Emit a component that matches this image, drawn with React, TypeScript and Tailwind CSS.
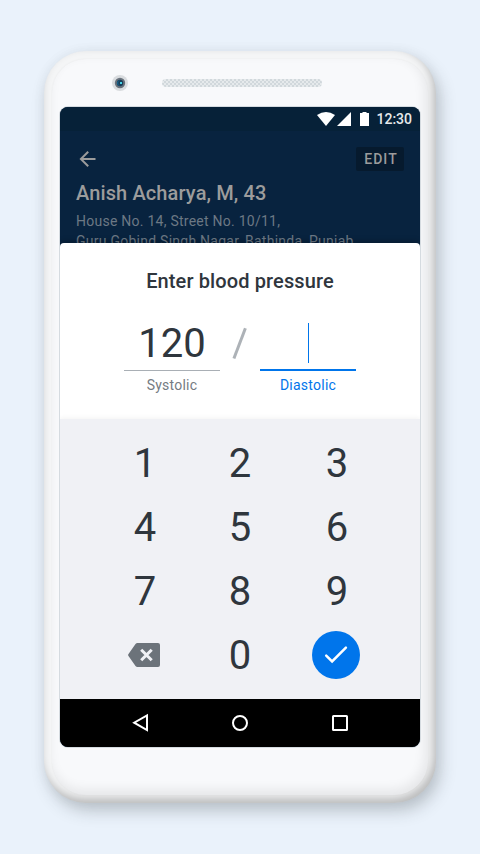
import React from "react";

const digits = ["1", "2", "3", "4", "5", "6", "7", "8", "9"];

function StatusBar() {
  return (
    <div className="flex h-6 shrink-0 items-center justify-end bg-[#062138] pr-2 text-white">
      <svg width="52" height="24" viewBox="0 0 52 24" fill="currentColor">
        <path d="M0 8Q9 2 18 8L9 19Z" />
        <path d="M20 19H34V5Z" />
        <path d="M43 6h2.500V5h4v1H52v13h-9z" />
      </svg>
      <span className="ml-[7px] text-[14px] leading-6 font-medium text-[#e6e9eb]">12:30</span>
    </div>
  );
}

function PatientHeader() {
  return (
    <header className="h-28 shrink-0 overflow-hidden bg-[#08233f] px-4 pt-4 text-[#9c9c9c]">
      <div className="flex h-6 items-center justify-between">
        <svg width="24" height="24" viewBox="0 0 24 24" fill="currentColor">
          <path d="M19.500 11H7.330l5.590-5.590L11.500 4l-8 8 8 8 1.410-1.410L7.330 13H19.500v-2z" />
        </svg>
        <button className="h-6 w-12 rounded-[2px] bg-[#061a2e] pl-[2px] text-[14px] leading-6 font-medium tracking-[1.1px]">EDIT</button>
      </div>
      <h1 className="mt-2 text-[20px] leading-7 font-medium tracking-[0.12px] whitespace-nowrap">Anish Acharya, M, 43</h1>
      <p className="mt-1 text-[14px] leading-5 tracking-[0.25px] whitespace-nowrap text-[#6c7884]">
        House No. 14, Street No. 10/11,
        <br />
        Guru Gobind Singh Nagar, Bathinda, Punjab
      </p>
    </header>
  );
}

function PressureForm() {
  return (
    <section className="h-[176px] shrink-0 bg-white pt-6">
      <h2 className="text-center text-[20px] leading-7 font-medium tracking-[0.12px]">Enter blood pressure</h2>
      <div className="mt-6 flex justify-center">
        <div className="w-24 text-center">
          <div className="h-[52px] border-b border-[#a9afb5] pt-px text-[40px] leading-[48px]">120</div>
          <div className="mt-1 text-[14px] leading-5 tracking-[0.25px] text-[#757b82]">Systolic</div>
        </div>
        <div className="flex w-10 justify-center">
          <svg width="16" height="48" viewBox="0 0 16 48" fill="none">
            <path d="M13.400 9.300L1.900 39.500" stroke="#adb2b7" strokeWidth="3" />
          </svg>
        </div>
        <div className="w-24 text-center">
          <div className="flex h-[52px] justify-center border-b-2 border-[#0075eb] pt-[4px]">
            <span className="h-10 w-px bg-[#0075eb]" />
          </div>
          <div className="mt-1 text-[14px] leading-5 tracking-[0.25px] text-[#0075eb]">Diastolic</div>
        </div>
      </div>
    </section>
  );
}

function Keypad() {
  return (
    <section className="h-[280px] shrink-0 bg-[#f0f1f5] px-12 pt-3 shadow-[0_-1px_5px_rgba(0,0,0,0.05)]">
      <div className="grid grid-cols-[72px_120px_72px] grid-rows-[64px_64px_64px_64px] place-items-center">
        {digits.map((digit, index) => (
          <button key={digit} className={`pt-[2px] text-[40px] leading-[48px] ${index % 3 === 1 ? "" : "pl-[2px]"}`}>{digit}</button>
        ))}
        <button aria-label="Delete">
          <svg width="32" height="24" viewBox="0 0 32 24" fill="none">
            <path d="M9.500 0H30a2 2 0 0 1 2 2v20a2 2 0 0 1-2 2H9.500q-1.200 0-2-1.100L.5 13q-.8-1 0-2L7.500 1.100Q8.300 0 9.500 0Z" fill="#6c737a" />
            <path d="m13.200 6.800 10.500 10.500m0-10.500L13.200 17.300" stroke="#f0f1f5" strokeWidth="3" />
          </svg>
        </button>
        <button className="pt-[2px] text-[40px] leading-[48px]">0</button>
        <button aria-label="Confirm" className="flex h-12 w-12 items-center justify-center rounded-full bg-[#0075eb]">
          <svg width="24" height="20" viewBox="0 0 24 20" fill="none">
            <path d="m2.200 10.700 5.900 5.800L21.900 2.700" stroke="white" strokeWidth="2.500" strokeLinecap="round" strokeLinejoin="miter" />
          </svg>
        </button>
      </div>
    </section>
  );
}

function NavigationBar() {
  return (
    <nav className="flex h-12 shrink-0 items-center justify-center bg-black">
      <svg width="216" height="24" viewBox="0 0 216 24" fill="none" stroke="white" strokeWidth="2">
        <path d="M15 4.500v14.500L2.200 11.700Z" />
        <circle cx="108" cy="12" r="7" />
        <rect x="201" y="5" width="14" height="14" rx=".5" />
      </svg>
    </nav>
  );
}

export default function App() {
  return (
    <main className="flex h-[854px] w-[480px] justify-center overflow-hidden bg-[#eaf2fb] pt-[51px] font-['Roboto',sans-serif] text-[#2f363d]">
      <div className="h-[752px] w-[392px] rounded-[42px] bg-[#f4f5f6] p-2 shadow-[4px_8px_16px_rgba(47,54,61,0.25),0_0_14px_rgba(47,54,61,0.04),inset_-3px_-5px_10px_rgba(0,0,0,0.24)]">
        <div className="h-[736px] rounded-[34px] bg-[#f8f9fb] px-2 shadow-[inset_-3px_-5px_12px_rgba(0,0,0,0.08),0_0_2px_rgba(0,0,0,0.06)]">
          <div className="flex h-12 items-center pl-[52px]">
            <svg width="16" height="16" viewBox="0 0 16 16">
              <circle cx="8" cy="8" r="8" fill="#d9dcdf" />
              <circle cx="8" cy="8" r="5.200" fill="#69727c" />
              <circle cx="8" cy="8" r="3.200" fill="#193e59" />
              <path d="M7 5.500a3 3 0 0 0 0 5" fill="none" stroke="#16709c" />
              <rect x="8" y="7" width="2" height="2" fill="#48d4e8" />
            </svg>
            <svg className="ml-[34px]" width="160" height="8" viewBox="0 0 160 8">
              <defs>
                <pattern id="speaker" width="4" height="4" patternUnits="userSpaceOnUse">
                  <rect width="4" height="4" fill="#e6eaec" />
                  <path d="M0 0h2v2H0zm2 2h2v2H2z" fill="#d1d8dc" />
                </pattern>
              </defs>
              <rect width="160" height="8" rx="4" fill="url(#speaker)" />
            </svg>
          </div>
          <div className="flex h-[640px] w-[360px] flex-col overflow-hidden rounded-lg bg-[#08233f] shadow-[0_0_0_1px_#d5dbe0]">
            <StatusBar />
            <PatientHeader />
            <div className="shrink-0 overflow-hidden rounded-t-[4px] shadow-[0_-1px_6px_rgba(0,0,0,0.3)]">
              <PressureForm />
              <Keypad />
            </div>
            <NavigationBar />
          </div>
        </div>
      </div>
    </main>
  );
}
